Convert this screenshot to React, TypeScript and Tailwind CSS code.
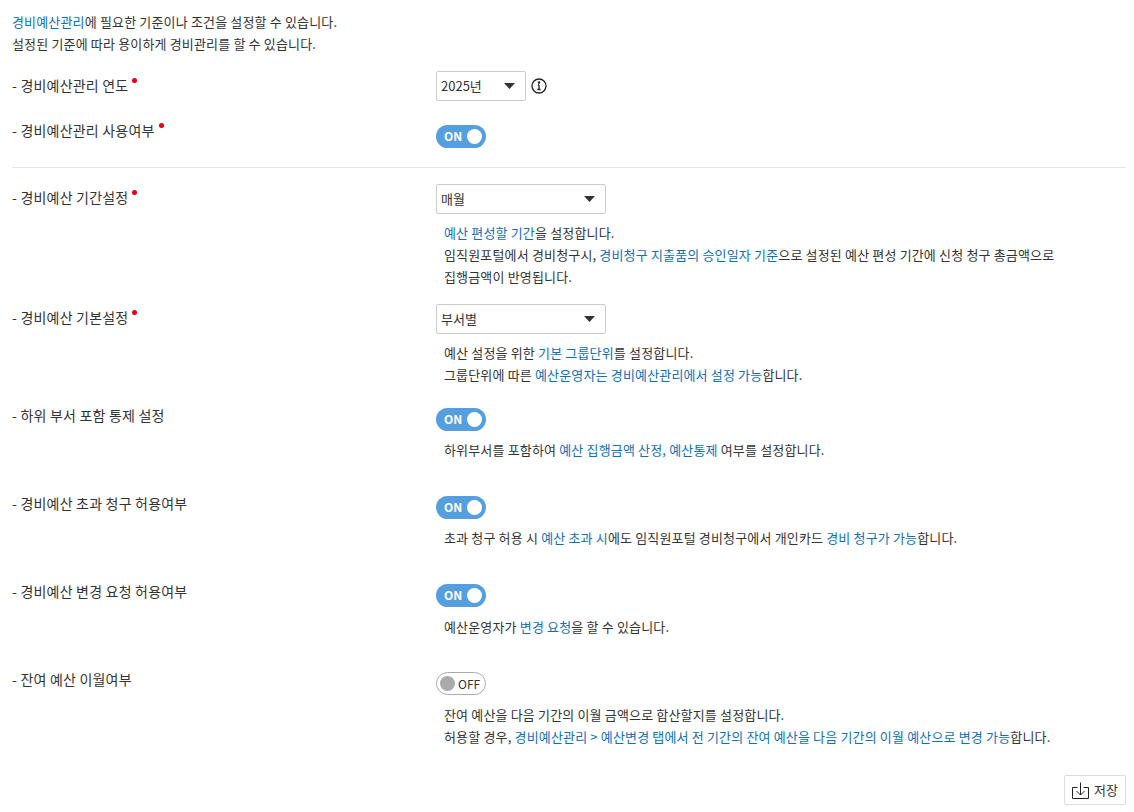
import React from "react";

const B = ({ children }: { children: React.ReactNode }) => <span className="text-[#0f6fb8]">{children}</span>;

const Dot = () => <span className="absolute -right-[9px] top-[3px] w-[5px] h-[5px] rounded-full bg-[#e60012]" />;

const Label = ({ text, required }: { text: string; required?: boolean }) => (
  <div className="w-[424px] shrink-0 text-[14px] leading-[20px] tracking-[0.2px] text-[#333]">
    <span className="relative inline-block">
      - {text}
      {required && <Dot />}
    </span>
  </div>
);

const Select = ({ value, width }: { value: string; width: string }) => (
  <div className={`${width} h-[30px] border border-[#ccc] rounded-[2px] bg-white flex items-center justify-between pl-1 pr-[10px] text-[13px] text-[#333]`}>
    <span>{value}</span>
    <svg width="11" height="6" viewBox="0 0 11 6">
      <path d="M0 0h11L5.5 6z" fill="#333" />
    </svg>
  </div>
);

const Toggle = ({ on = true }: { on?: boolean }) =>
  on ? (
    <div className="w-[50px] h-[23px] rounded-full bg-[#559fde] flex items-center justify-between pl-2 pr-[4px] pb-[2px] text-[12px] font-bold text-white">
      <span>ON</span>
      <span className="w-[15px] h-[15px] rounded-full bg-white mt-[2px]" />
    </div>
  ) : (
    <div className="w-[50px] h-[23px] rounded-full border border-[#aaa] bg-white flex items-center pl-[3px] gap-[3px] text-[12px] font-normal text-[#333]">
      <span className="w-[15px] h-[15px] rounded-full bg-[#aaa]" />
      <span>OFF</span>
    </div>
  );

const Desc = ({ children, mt = "mt-2" }: { children: React.ReactNode; mt?: string }) => (
  <div className={`${mt} pl-2 text-[13px] leading-[22px] tracking-[0.16px] text-[#333]`}>{children}</div>
);

export default function App() {
  return (
    <div className="w-[1134px] h-[812px] overflow-hidden bg-white pl-3 pr-2 pt-[11px] font-['Noto_Sans_CJK_KR','Noto_Sans',sans-serif]">
      <div className="text-[13px] leading-[22px] tracking-[0.16px] text-[#333]">
        <div><B>경비예산관리</B>에 필요한 기준이나 조건을 설정할 수 있습니다.</div>
        <div>설정된 기준에 따라 용이하게 경비관리를 할 수 있습니다.</div>
      </div>

      <div className="flex mt-4">
        <div className="pt-1"><Label text="경비예산관리 연도" required /></div>
        <div className="flex items-center gap-[5px]">
          <Select value="2025년" width="w-[90px]" />
          <svg width="16" height="16" viewBox="0 0 16 16" fill="none" stroke="#222" strokeWidth="1.3">
            <circle cx="8" cy="8" r="7" />
            <path d="M8 7v4.5M6.4 11.5h3.2M6.8 7H8" />
            <circle cx="8" cy="4.6" r="0.6" fill="#222" />
          </svg>
        </div>
      </div>

      <div className="flex mt-[19px]">
        <Label text="경비예산관리 사용여부" required />
        <div className="pt-[5px]"><Toggle /></div>
      </div>

      <div className="border-t border-[#e5e5e5] mt-[19px]" />

      <div className="flex mt-4">
        <div className="pt-[3px]"><Label text="경비예산 기간설정" required /></div>
        <div>
          <Select value="매월" width="w-[170px]" />
          <Desc>
            <div><B>예산 편성할 기간</B>을 설정합니다.</div>
            <div>임직원포털에서 경비청구시, <B>경비청구 지출품의 승인일자 기준</B>으로 설정된 예산 편성 기간에 신청 청구 총금액으로</div>
            <div>집행금액이 반영됩니다.</div>
          </Desc>
        </div>
      </div>

      <div className="flex mt-4">
        <div className="pt-[3px]"><Label text="경비예산 기본설정" required /></div>
        <div>
          <Select value="부서별" width="w-[170px]" />
          <Desc>
            <div>예산 설정을 위한 <B>기본 그룹단위</B>를 설정합니다.</div>
            <div>그룹단위에 따른 <B>예산운영자는 경비예산관리에서 설정 가능</B>합니다.</div>
          </Desc>
        </div>
      </div>

      <div className="flex mt-[19px]">
        <Label text="하위 부서 포함 통제 설정" />
        <div className="pt-[3px]">
          <Toggle />
          <Desc>하위부서를 포함하여 <B>예산 집행금액 산정, 예산통제</B> 여부를 설정합니다.</Desc>
        </div>
      </div>

      <div className="flex mt-8">
        <Label text="경비예산 초과 청구 허용여부" />
        <div className="pt-[3px]">
          <Toggle />
          <Desc>초과 청구 허용 시 <B>예산 초과 시</B>에도 임직원포털 경비청구에서 개인카드 <B>경비 청구가 가능</B>합니다.</Desc>
        </div>
      </div>

      <div className="flex mt-8">
        <Label text="경비예산 변경 요청 허용여부" />
        <div className="pt-[3px]">
          <Toggle />
          <Desc mt="mt-[9px]">예산운영자가 <B>변경 요청</B>을 할 수 있습니다.</Desc>
        </div>
      </div>

      <div className="flex mt-[31px]">
        <Label text="잔여 예산 이월여부" />
        <div className="pt-[3px]">
          <Toggle on={false} />
          <Desc mt="mt-[9px]">
            <div>잔여 예산을 다음 기간의 이월 금액으로 합산할지를 설정합니다.</div>
            <div>허용할 경우, <B>경비예산관리 &gt; 예산변경 탭에서 전 기간의 잔여 예산을 다음 기간의 이월 예산으로 변경 가능</B>합니다.</div>
          </Desc>
        </div>
      </div>

      <div className="flex justify-end mt-[27px]">
        <button className="w-[62px] h-[30px] border border-[#ddd] rounded-[2px] bg-white flex items-center justify-center gap-[5px] text-[13px] tracking-[0.13px] text-[#333]">
          <svg width="17" height="17" viewBox="0 0 17 17" fill="none" stroke="#222" strokeWidth="1">
            <path d="M5.5 5.5H.5v11h16v-11h-5M8.5 .5v12.5M4.5 9l4 4 4-4" />
          </svg>
          저장
        </button>
      </div>
    </div>
  );
}
